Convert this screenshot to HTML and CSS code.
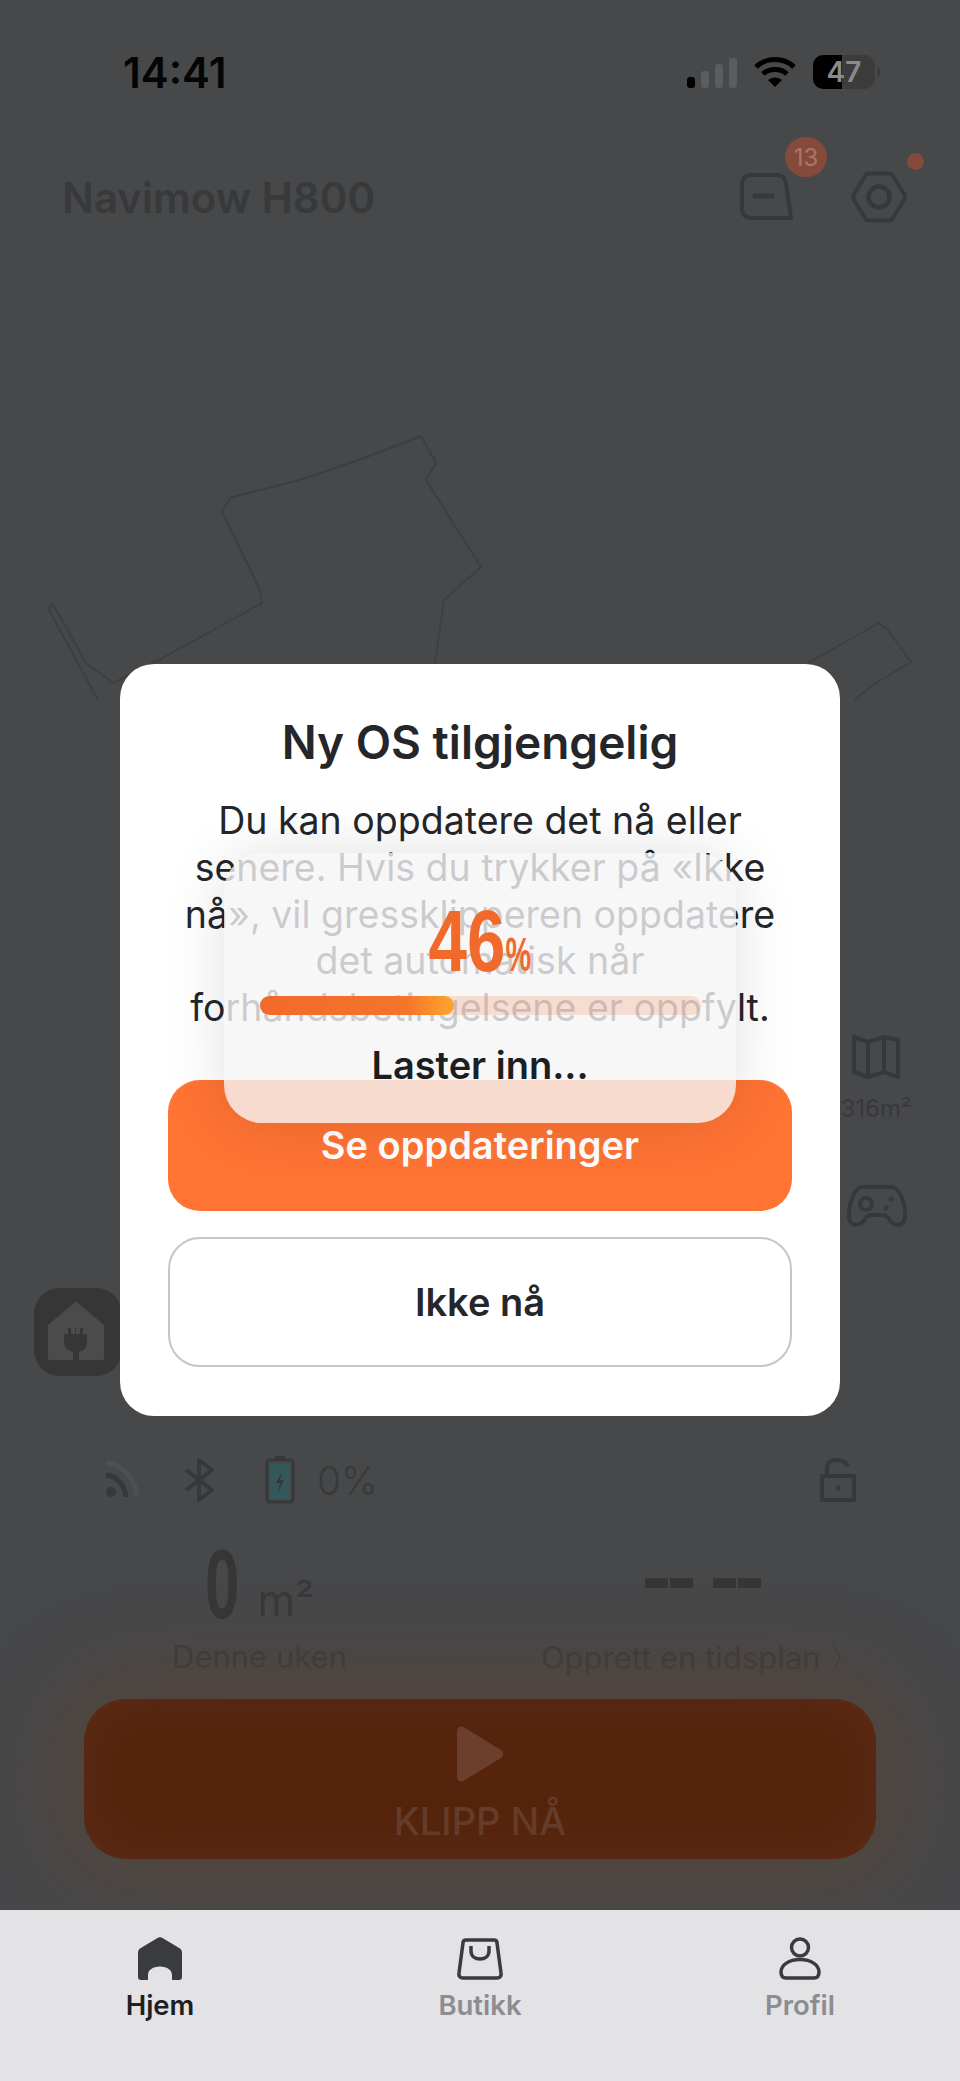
FILE: index.html
```html
<!DOCTYPE html>
<html lang="en">
<head>
    <meta charset="UTF-8">
    <meta name="viewport" content="width=device-width, initial-scale=1.0">
    <title>Navimow H800</title>
    <link rel="stylesheet" href="styles.css">
</head>
<body>
    <div class="screen">
        <div class="status-bar">
            <span class="clock">14:41</span>
            <div class="status-icons">
                <div class="signal">
                    <i class="bar bar1"></i><i class="bar bar2"></i><i class="bar bar3"></i><i class="bar bar4"></i>
                </div>
                <svg class="wifi" width="42" height="31" viewBox="0 0 42 31">
                    <path d="M2 10C12 0 30 0 40 10" fill="none" stroke="#000" stroke-width="5"/>
                    <path d="M9 17C15 11 27 11 33 17" fill="none" stroke="#000" stroke-width="5"/>
                    <path d="M21 30L14 23C18 19.500 24 19.500 28 23Z" fill="#000"/>
                </svg>
                <div class="battery">
                    <div class="battery-body"><span>47</span></div>
                    <i class="battery-tip"></i>
                </div>
            </div>
        </div>

        <div class="header">
            <span class="device-name">Navimow H800</span>
            <div class="header-icons">
                <div class="icon-btn">
                    <svg width="56" height="48" viewBox="0 0 56 48">
                        <path d="M13 2H38C44 2 46 5 47 11L52 45H13C6 45 3 41 3 35V12C3 6 6 2 13 2Z" fill="none" stroke="#373839" stroke-width="4" stroke-linejoin="round"/>
                        <path d="M16 23H33" stroke="#373839" stroke-width="5" stroke-linecap="round"/>
                    </svg>
                    <span class="badge">13</span>
                </div>
                <div class="icon-btn">
                    <svg width="58" height="52" viewBox="0 0 58 52">
                        <path d="M19 2.500H39C41 2.500 42 3 43 5L54 23C55 25 55 27 54 29L43 47C42 49 41 49.500 39 49.500H19C17 49.500 16 49 15 47L4 29C3 27 3 25 4 23L15 5C16 3 17 2.500 19 2.500Z" fill="none" stroke="#373839" stroke-width="4"/>
                        <circle cx="29" cy="26" r="10.500" fill="none" stroke="#373839" stroke-width="4.500"/>
                    </svg>
                    <i class="dot"></i>
                </div>
            </div>
        </div>

        <div class="map-area">
            <svg class="lawn" width="960" height="1190" viewBox="0 250 960 1190">
                <path d="M421 436L436 463L426 480L481 567L444 600L434 670M421 436L367 457L306 478L230 498L222 512L260 590L262 603L159 660L113 683L86 663L52 603L49 610L98 700M808 663L879 623L888 630L911 662L876 683L854 700" fill="none" stroke="#3e3f41" stroke-width="2" stroke-linejoin="round"/>
            </svg>
            <div class="tool tool-map">
                <svg width="48" height="44" viewBox="0 0 48 44">
                    <path d="M2 2L16 7L32 2L46 5V42L32 37L16 42L2 37Z M16 7V42 M32 2V37" fill="none" stroke="#373839" stroke-width="4" stroke-linejoin="round"/>
                </svg>
                <span class="tool-label">316m²</span>
            </div>
            <div class="tool tool-pad">
                <svg width="60" height="42" viewBox="0 0 60 42">
                    <path d="M16 2H44C53 2 59 20 58 32C57 42 47 42 42 34C40 31 38 30 36 30H24C22 30 20 31 18 34C13 42 3 42 2 32C1 20 7 2 16 2Z" fill="none" stroke="#373839" stroke-width="4"/>
                    <circle cx="19" cy="19" r="6" fill="none" stroke="#373839" stroke-width="4"/>
                    <circle cx="44" cy="14" r="2.500" fill="#373839"/>
                    <circle cx="39" cy="23" r="2.500" fill="#373839"/>
                </svg>
            </div>
            <div class="dock-btn">
                <svg width="60" height="60" viewBox="0 0 60 60">
                    <path d="M2 24L28 2L54 24V56H2Z" fill="#4b4b4c" stroke="#4b4b4c" stroke-width="4" stroke-linejoin="round"/>
                    <path d="M26 26V32H22V26H19V32H15V40C15 46 20 49 24 50V60H30V50C34 49 38 46 38 40V32H34V26H31V32H27V26Z" fill="#363637" transform="translate(1 0)"/>
                </svg>
            </div>
        </div>

        <div class="panel">
            <div class="panel-top">
                <div class="conn-icons">
                    <svg class="rss" width="34" height="38" viewBox="0 0 34 38">
                        <path d="M2 2C18 3 31 16 33 36" fill="none" stroke="#4e4f50" stroke-width="5"/>
                        <path d="M2 14C13 15 21 24 22 36" fill="none" stroke="#373839" stroke-width="5"/>
                        <circle cx="7" cy="31" r="5" fill="#373839"/>
                    </svg>
                    <svg class="bt" width="32" height="44" viewBox="0 0 32 44">
                        <path d="M2 12L28 32L15 42V2L28 12L2 32" fill="none" stroke="#373839" stroke-width="4" stroke-linejoin="round"/>
                    </svg>
                    <svg class="batt" width="30" height="48" viewBox="0 0 30 48">
                        <rect x="10" y="0" width="10" height="5" fill="#373839"/>
                        <rect x="2" y="4" width="26" height="42" rx="3" fill="none" stroke="#373839" stroke-width="3"/>
                        <rect x="5" y="8" width="20" height="35" fill="#34585a"/>
                        <path d="M17 16L11 27H15L13 36L19 24H15Z" fill="#373839"/>
                    </svg>
                    <span class="batt-pct">0%</span>
                </div>
                <svg class="lock" width="36" height="44" viewBox="0 0 36 44">
                    <path d="M7 18V10C7 4 11 2 16 2C22 2 26 4 28 8" fill="none" stroke="#373839" stroke-width="4"/>
                    <rect x="2" y="18" width="32" height="24" fill="none" stroke="#373839" stroke-width="4"/>
                    <circle cx="18" cy="30" r="2.500" fill="#373839"/>
                </svg>
            </div>
            <div class="stats">
                <div class="stat">
                    <div class="stat-value"><span class="big-zero">0</span><span class="unit">m²</span></div>
                    <span class="stat-label">Denne uken</span>
                </div>
                <div class="stat">
                    <div class="stat-value dash-value"><span class="dashes"><i></i><i></i></span><span class="dashes"><i></i><i></i></span></div>
                    <span class="stat-label">Opprett en tidsplan 〉</span>
                </div>
            </div>
            <div class="mow-btn">
                <svg width="48" height="56" viewBox="0 0 48 56">
                    <path d="M1 6C1 1 5 -1 9 2L45 24C48 26 48 30 45 32L9 54C5 57 1 55 1 50Z" fill="#6c3f2c"/>
                </svg>
                <span>KLIPP NÅ</span>
            </div>
        </div>

        <div class="tab-bar">
            <div class="tab active">
                <svg width="44" height="44" viewBox="0 0 44 44">
                    <path d="M19.500 1L2 11.500C.7 12.500 0 14 0 16V40C0 42 1 43 3 43H10V38C10 33 15 29.500 22 29.500C29 29.500 34 33 34 38V43H41C43 43 44 42 44 40V16C44 14 43.300 12.500 42 11.500L24.500 1C23 0 21 0 19.500 1Z" fill="#3a3b3f"/>
                </svg>
                <span>Hjem</span>
            </div>
            <div class="tab">
                <svg width="46" height="42" viewBox="0 0 46 42">
                    <path d="M9 2H37C39 2 40 3 40 5L44 35C44.500 38 43 40 40 40H6C3 40 1.500 38 2 35L6 5C6 3 7 2 9 2Z" fill="none" stroke="#3a3b3f" stroke-width="3.500"/>
                    <path d="M14 8V13C14 18 18 21 23 21C28 21 32 18 32 13V8" fill="none" stroke="#3a3b3f" stroke-width="3.500"/>
                </svg>
                <span>Butikk</span>
            </div>
            <div class="tab">
                <svg width="42" height="44" viewBox="0 0 42 44">
                    <circle cx="21" cy="10.500" r="8.500" fill="none" stroke="#3a3b3f" stroke-width="3.500"/>
                    <path d="M21 22.500C10 22.500 2 28 2 35C2 39 4 41 7 41H35C38 41 40 39 40 35C40 28 32 22.500 21 22.500Z" fill="none" stroke="#3a3b3f" stroke-width="3.500"/>
                </svg>
                <span>Profil</span>
            </div>
        </div>
    </div>

    <div class="dialog">
        <h1>Ny OS tilgjengelig</h1>
        <p>Du kan oppdatere det nå eller<br>senere. Hvis du trykker på «Ikke<br>nå», vil gressklipperen oppdatere<br>det automatisk når<br>forhåndsbetingelsene er oppfylt.</p>
        <button class="btn-primary">Se oppdateringer</button>
        <button class="btn-outline">Ikke nå</button>
    </div>

    <div class="loader">
        <div class="percent"><span class="num">46</span><span class="pct">%</span></div>
        <div class="track"><div class="fill" style="width: 44%"></div></div>
        <div class="loader-text">Laster inn...</div>
    </div>
</body>
</html>
```

FILE: styles.css
```css
* {
    box-sizing: border-box;
}
body {
    margin: 0;
    width: 960px;
    height: 2081px;
    position: relative;
    overflow: hidden;
    font-family: Inter, "Noto Sans", sans-serif;
    background-color: #47484a;
}
.screen {
    display: flex;
    flex-direction: column;
    height: 2081px;
}

/* status bar */
.status-bar {
    height: 144px;
    flex-shrink: 0;
    padding: 0 80px 0 123px;
    display: flex;
    justify-content: space-between;
    align-items: center;
}
.clock {
    font-size: 42px;
    font-weight: 600;
    color: #050505;
}
.status-icons {
    display: flex;
    align-items: center;
    gap: 17px;
}
.signal {
    display: flex;
    align-items: flex-end;
    gap: 6px;
    height: 31px;
}
.bar {
    width: 8px;
    border-radius: 3px;
    background-color: #5b5c5d;
}
.bar1 {
    height: 11px;
    background-color: #000;
}
.bar2 {
    height: 17px;
}
.bar3 {
    height: 24px;
}
.bar4 {
    height: 30px;
}
.battery {
    display: flex;
    align-items: center;
    gap: 2px;
}
.battery-body {
    width: 62px;
    height: 34px;
    border-radius: 10px;
    background: linear-gradient(90deg, #000 46%, #3c3c3d 46%);
    display: flex;
    align-items: center;
    justify-content: center;
    color: #8b8b8d;
    font-size: 28px;
    font-weight: 600;
}
.battery-tip {
    width: 3px;
    height: 10px;
    border-radius: 0 3px 3px 0;
    background-color: #3c3c3d;
}

/* header */
.header {
    height: 106px;
    flex-shrink: 0;
    padding: 0 52px 0 62px;
    display: flex;
    justify-content: space-between;
    align-items: center;
}
.device-name {
    font-size: 42px;
    font-weight: 600;
    color: #38393a;
}
.header-icons {
    display: flex;
    gap: 55px;
    align-items: center;
}
.icon-btn {
    position: relative;
    display: flex;
}
.badge {
    position: absolute;
    left: 46px;
    top: -36px;
    width: 42px;
    height: 40px;
    border-radius: 50%;
    background-color: #864a3d;
    color: #a9776b;
    font-size: 24px;
    display: flex;
    align-items: center;
    justify-content: center;
}
.dot {
    position: absolute;
    right: -16px;
    top: -18px;
    width: 17px;
    height: 17px;
    border-radius: 50%;
    background-color: #864a3d;
}

/* map */
.map-area {
    flex: 1;
    position: relative;
}
.lawn {
    position: absolute;
    left: 0;
    top: 0;
}
.tool {
    position: absolute;
    display: flex;
    flex-direction: column;
    align-items: center;
}
.tool-map {
    left: 820px;
    width: 112px;
    top: 785px;
    gap: 15px;
}
.tool-label {
    font-size: 24px;
    color: #38393a;
}
.tool-pad {
    left: 847px;
    top: 935px;
}
.dock-btn {
    position: absolute;
    left: 34px;
    top: 1038px;
    width: 88px;
    height: 88px;
    border-radius: 26px;
    background-color: #363637;
    display: flex;
    align-items: center;
    justify-content: center;
}

/* bottom panel */
.panel {
    height: 510px;
    flex-shrink: 0;
    padding: 0 84px;
    display: flex;
    flex-direction: column;
}
.panel-top {
    height: 80px;
    margin-top: 40px;
    padding: 0 20px;
    display: flex;
    justify-content: space-between;
    align-items: center;
}
.conn-icons {
    display: flex;
    align-items: center;
}
.rss {
    margin-right: 46px;
}
.bt {
    margin-right: 49px;
}
.batt {
    margin-right: 22px;
}
.batt-pct {
    font-size: 39px;
    font-weight: 300;
    color: #383939;
}
.stats {
    display: grid;
    grid-template-columns: 1fr 1fr;
    margin: 10px -45px 0;
}
.stat {
    display: flex;
    flex-direction: column;
    align-items: center;
}
.stat-value {
    height: 100px;
    display: flex;
    align-items: flex-end;
    justify-content: center;
}
.dash-value {
    margin-left: 5px;
}
.big-zero {
    font-family: "Liberation Sans", sans-serif;
    font-weight: 700;
    font-size: 98px;
    line-height: 92px;
    color: #363637;
    display: inline-block;
    transform: scaleX(0.63);
    margin: 0 -10px;
}
.unit {
    font-size: 43px;
    line-height: 60px;
    margin-left: 18px;
    color: #38393a;
}
.dashes {
    display: flex;
    gap: 2px;
    margin: 0 10px 42px;
}
.dashes i {
    width: 23px;
    height: 10px;
    background-color: #363637;
}
.stat-label {
    margin-top: 8px;
    font-size: 31px;
    color: #3d3d3d;
}
.mow-btn {
    height: 160px;
    margin-top: 19px;
    padding-top: 12px;
    border-radius: 42px;
    background-color: #56240d;
    box-shadow: 0 0 90px 24px rgba(125, 62, 20, 0.26), inset 0 0 60px rgba(110, 75, 60, 0.22);
    display: flex;
    flex-direction: column;
    align-items: center;
    justify-content: center;
    gap: 16px;
    color: #653b2a;
    font-size: 38px;
    font-weight: 500;
}

/* tab bar */
.tab-bar {
    height: 171px;
    flex-shrink: 0;
    position: relative;
    background-color: #e3e3e6;
    display: grid;
    grid-template-columns: 320px 320px 320px;
    padding-top: 27px;
}
.tab {
    display: flex;
    flex-direction: column;
    align-items: center;
    gap: 7px;
    font-size: 27.500px;
    font-weight: 600;
    color: #8c8c91;
}
.tab svg {
    height: 44px;
}
.tab.active {
    color: #1f2023;
}

/* update dialog */
.dialog {
    position: absolute;
    left: 120px;
    top: 664px;
    width: 720px;
    height: 752px;
    padding: 50px 48px 0;
    background-color: #fff;
    border-radius: 34px;
    text-align: center;
    display: flex;
    flex-direction: column;
    align-items: stretch;
}
.dialog h1 {
    margin: 0;
    font-size: 46px;
    line-height: 56px;
    font-weight: 600;
    color: #25262a;
}
.dialog p {
    margin: 28px -10px 0;
    font-size: 37.500px;
    line-height: 46.800px;
    color: #25262a;
}
.btn-primary, .btn-outline {
    width: 100%;
    border-radius: 32px;
    font-family: inherit;
    font-size: 38px;
    font-weight: 600;
}
.btn-primary {
    height: 131px;
    margin-top: 48px;
    border: none;
    background-color: #ff7333;
    color: #fff;
}
.btn-outline {
    height: 130px;
    margin-top: 26px;
    background-color: #fff;
    border: 2.500px solid #c6c6ca;
    color: #25262a;
}

/* loading overlay */
.loader {
    position: absolute;
    left: 224px;
    top: 853px;
    width: 512px;
    height: 270px;
    padding: 53px 36px 0;
    background-color: rgba(245, 245, 246, 0.8);
    border-radius: 38px;
    box-shadow: 0 0 60px rgba(0, 0, 0, 0.12);
    display: flex;
    flex-direction: column;
    align-items: center;
}
.percent {
    height: 70px;
    display: flex;
    align-items: baseline;
    color: #f26a2b;
    font-family: "Liberation Sans", sans-serif;
    font-weight: 700;
}
.num {
    display: inline-block;
    font-size: 88px;
    line-height: 70px;
    transform: scaleX(0.785);
    margin: 0 -10.500px;
}
.pct {
    display: inline-block;
    font-size: 48px;
    line-height: 40px;
    transform: scaleX(0.6);
    margin: 0 -8.500px;
}
.track {
    width: 441px;
    height: 19px;
    margin-top: 20px;
    border-radius: 10px;
    background-color: rgba(242, 106, 43, 0.18);
}
.fill {
    height: 100%;
    border-radius: 10px;
    background: linear-gradient(90deg, #f26a2b, #f4742b 75%, #ffa52f);
}
.loader-text {
    margin-top: 27px;
    font-size: 38px;
    font-weight: 600;
    color: #1d1e21;
}
```
